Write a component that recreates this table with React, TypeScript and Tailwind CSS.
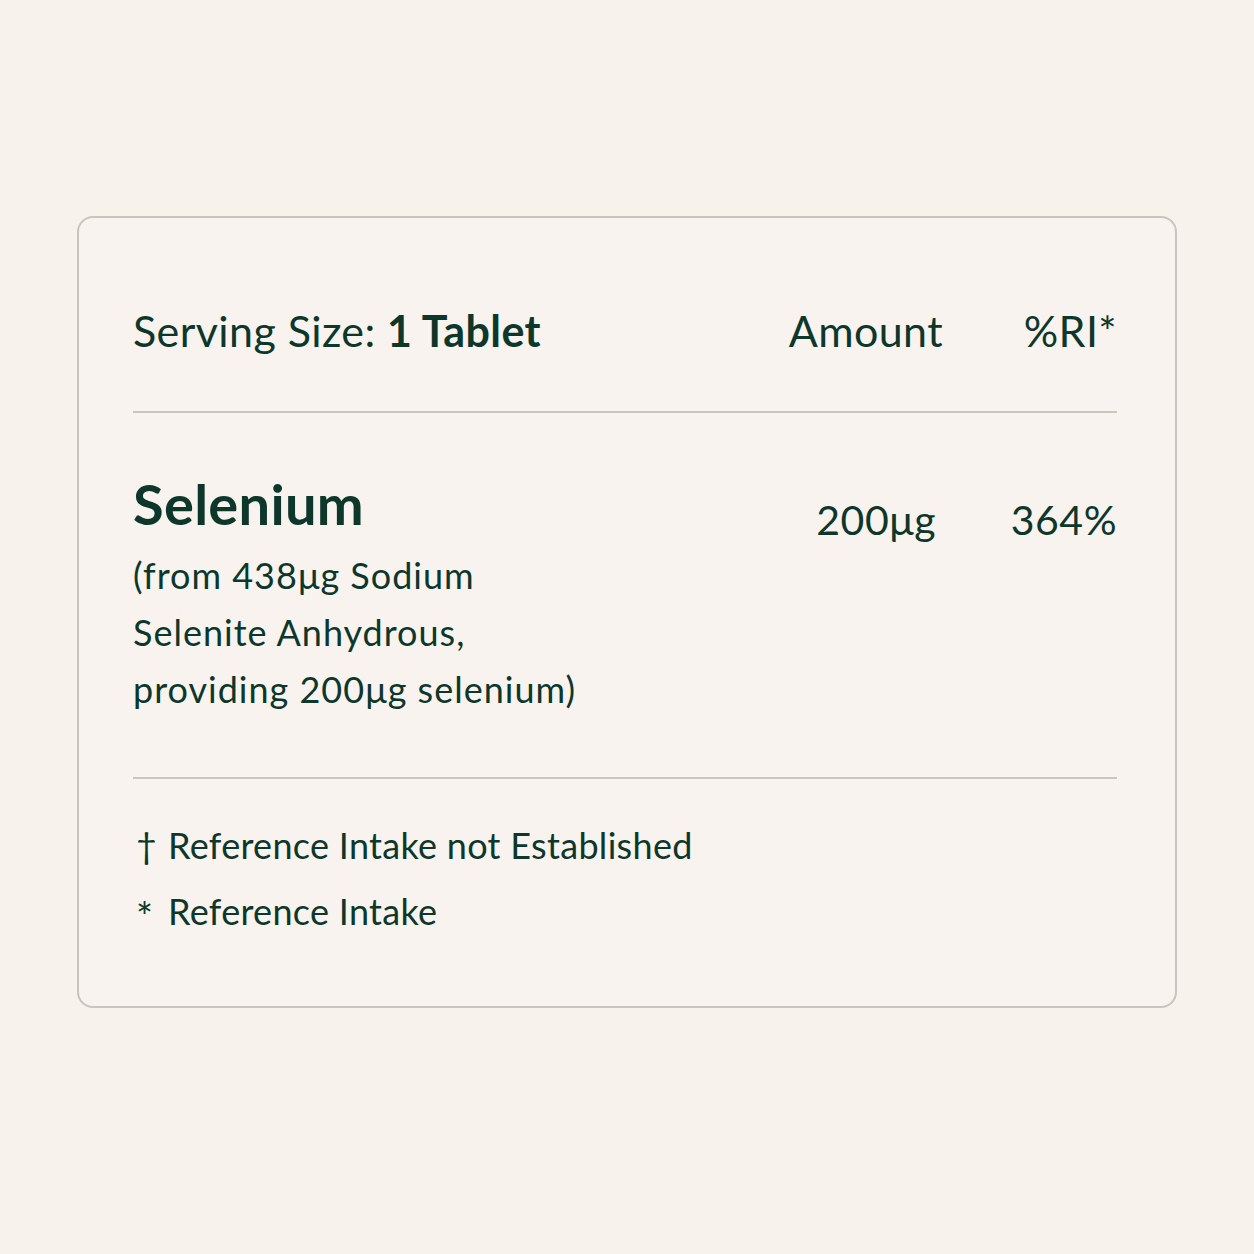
import React from 'react';

const ink = 'text-[#0e372c]';

const App: React.FC = () => {
    return (
        <div className="min-h-[1254px] w-full bg-[#f7f2ec] pt-[216px] px-[77px] font-['Lato','Noto_Sans',sans-serif]">
            <div className={`rounded-[16px] border-2 border-[#cbc4bc] bg-[#f8f3ee] pl-[54px] pr-[58px] pt-[89px] pb-[67px] ${ink}`}>
                {/* header row */}
                <div className="flex items-center h-[48px] text-[43px] leading-[48px] tracking-[0.4px]">
                    <div className="flex-1">
                        Serving Size: <span className="font-bold">1 Tablet</span>
                    </div>
                    <div className="w-[160px] text-right">Amount</div>
                    <div className="w-[174px] text-right">%RI*</div>
                </div>

                <div className="mt-[56px] h-[2px] bg-[#cdc6be]" />

                {/* nutrient row */}
                <div className="flex mt-[61px]">
                    <div className="flex-1">
                        <div className="text-[56px] leading-[60px] font-bold tracking-[0.3px]">Selenium</div>
                        <div className="mt-[13px] text-[36px] leading-[57px] tracking-[1px]">
                            (from 438μg Sodium
                            <br />
                            Selenite Anhydrous,
                            <br />
                            providing 200μg selenium)
                        </div>
                    </div>
                    <div className="w-[160px] pr-[7px] text-right text-[41px] leading-[48px] mt-[22px] tracking-[0.5px]">200μg</div>
                    <div className="w-[174px] text-right text-[41px] leading-[48px] mt-[22px] tracking-[0.5px]">364%</div>
                </div>

                <div className="mt-[59px] h-[2px] bg-[#cdc6be]" />

                {/* footnotes */}
                <div className="mt-[44px] flex flex-col gap-[22px] text-[36px] leading-[44px] tracking-[0.3px]">
                    <div className="flex">
                        <span className="w-[35px] pl-[3px]">†</span>
                        <span>Reference Intake not Established</span>
                    </div>
                    <div className="flex">
                        <span className="w-[35px] pl-[3px] text-[40px] leading-[44px] pt-[6px]">*</span>
                        <span>Reference Intake</span>
                    </div>
                </div>
            </div>
        </div>
    );
};

export default App;
